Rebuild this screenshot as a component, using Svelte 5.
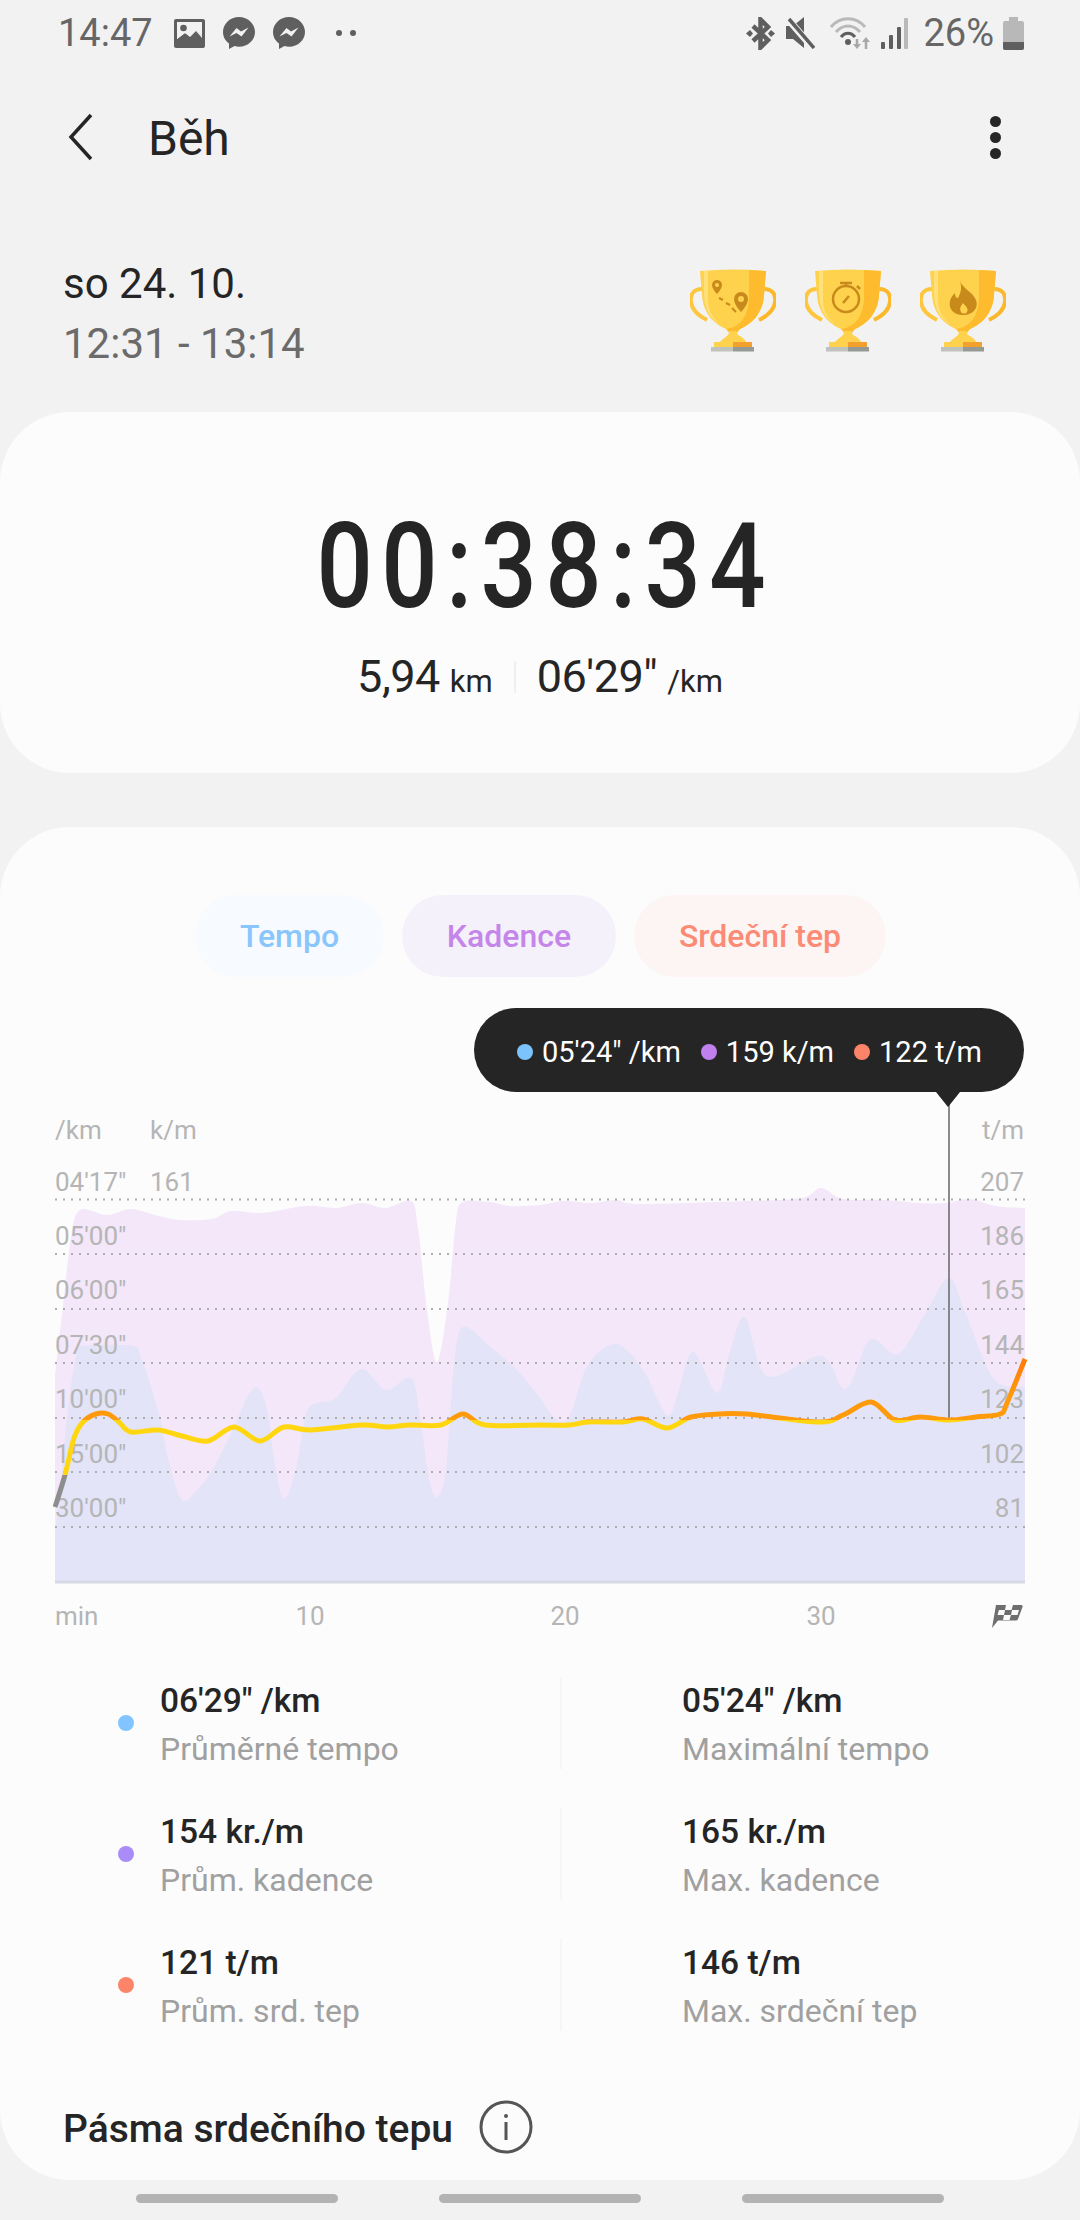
<script lang="ts">
  type Pt = [number, number];

  const cadence: Pt[] = [[55,1376],[62,1314],[71,1238],[80,1210],[107,1215],[131,1209],[155,1215],[179,1220],[212,1219],[231,1211],[262,1213],[306,1206],[336,1208],[362,1203],[386,1208],[411,1201],[418,1228],[427,1310],[437,1362],[448,1303],[456,1221],[463,1202],[489,1202],[510,1206],[540,1205],[564,1201],[592,1203],[616,1200],[640,1204],[747,1201],[802,1198],[821,1188],[843,1199],[884,1200],[919,1203],[946,1203],[970,1199],[995,1206],[1025,1208]];
  const pace: Pt[] = [[55,1534],[62,1469],[69,1400],[77,1352],[83,1346],[132,1346],[141,1358],[158,1410],[169,1462],[182,1500],[198,1489],[213,1469],[234,1427],[248,1396],[258,1388],[267,1410],[275,1465],[284,1499],[296,1469],[306,1414],[317,1403],[336,1398],[361,1369],[386,1390],[411,1378],[420,1417],[429,1479],[437,1497],[446,1469],[454,1365],[463,1327],[489,1346],[516,1369],[540,1398],[554,1417],[569,1417],[588,1365],[616,1344],[643,1370],[667,1415],[678,1393],[693,1352],[717,1393],[729,1355],[745,1317],[767,1376],[821,1356],[846,1389],[870,1340],[898,1354],[925,1314],[949,1278],[967,1317],[994,1379],[1025,1387]];
  const heart: Pt[] = [[55,1507],[65,1475],[74,1438],[83,1422],[96,1414],[108,1414],[119,1422],[131,1432],[158,1430],[182,1436],[208,1441],[234,1427],[260,1441],[284,1427],[310,1430],[361,1425],[387,1427],[410,1425],[441,1425],[463,1414],[485,1425],[540,1425],[569,1425],[588,1422],[622,1422],[643,1419],[667,1428],[691,1417],[719,1414],[747,1414],[819,1422],[843,1415],[871,1402],[895,1420],[920,1417],[949,1420],[976,1417],[1000,1414],[1007,1403],[1025,1359]];

  // catmull-rom through the sampled points
  function smooth(p: Pt[]): string {
    let d = `M${p[0][0]} ${p[0][1]}`;
    for (let i = 0; i < p.length - 1; i++) {
      const a = p[Math.max(i - 1, 0)], b = p[i], c = p[i + 1], e = p[Math.min(i + 2, p.length - 1)];
      const c1x = b[0] + (c[0] - a[0]) / 6, c1y = b[1] + (c[1] - a[1]) / 6;
      const c2x = c[0] - (e[0] - b[0]) / 6, c2y = c[1] - (e[1] - b[1]) / 6;
      d += `C${c1x.toFixed(1)} ${c1y.toFixed(1)} ${c2x.toFixed(1)} ${c2y.toFixed(1)} ${c[0]} ${c[1]}`;
    }
    return d;
  }
  const area = (p: Pt[]) => `${smooth(p)}L1025 1582L55 1582Z`;

  const grid = [1199.5, 1254, 1309, 1363, 1418, 1472, 1527];
  const paceLabels: [string, number][] = [["04'17\"",1191],["05'00\"",1245],["06'00\"",1299],["07'30\"",1354],["10'00\"",1408],["15'00\"",1463],["30'00\"",1517]];
  const heartLabels: [string, number][] = [["207",1191],["186",1245],["165",1299],["144",1354],["123",1408],["102",1463],["81",1517]];

  const stats = [
    { dot: '#82c4ff', value: `06'29" /km`, label: 'Průměrné tempo', max: `05'24" /km`, maxLabel: 'Maximální tempo' },
    { dot: '#a98cf8', value: '154 kr./m', label: 'Prům. kadence', max: '165 kr./m', maxLabel: 'Max. kadence' },
    { dot: '#fc8469', value: '121 t/m', label: 'Prům. srd. tep', max: '146 t/m', maxLabel: 'Max. srdeční tep' }
  ];
</script>

{#snippet cup()}
  <path d="M12 20C3 20 0 26 1 33C2 42 9 47 17 51" fill="none" stroke="#fdc63c" stroke-width="4"/>
  <path d="M74 20C83 20 86 26 85 33C84 42 77 47 69 51" fill="none" stroke="#fbb82b" stroke-width="4"/>
  <path d="M10 2Q43 -1 76 2L74 26C73 44 62 55 50 60L47 64L39 64L36 60C24 55 13 44 12 26Z" fill="#ffd24d"/>
  <path d="M59 1L76 2L74 26C73 44 62 55 50 60L44 66L36 60C50 58 58 48 59 30Z" fill="#fdbb2d"/>
  <path d="M14 2L18 2L18 30C18 44 24 50 30 55C20 50 15 40 14 26Z" fill="#ffe07a"/>
  <path d="M40 62L46 62L48 66C52 68 55 70 56 73L30 73C32 70 36 68 38 66Z" fill="#ffd24d"/>
  <rect x="24" y="73" width="19" height="5" fill="#ffd24d"/>
  <rect x="43" y="73" width="19" height="5" fill="#f2a02e"/>
  <rect x="21" y="78" width="22" height="4.5" fill="#bfc2bd"/>
  <rect x="43" y="78" width="21" height="4.5" fill="#959a94"/>
{/snippet}

{#snippet bubble()}
  <svg class="ico gap18" width="32" height="32" viewBox="0 0 32 32">
    <path d="M16 0C7 0 0 6.800 0 15C0 20 2.500 24 6 26.500V32L11.500 29C13 29.500 14.500 29.700 16 29.700C25 29.700 32 23 32 15C32 6.800 25 0 16 0Z" fill="#5f5f5f"/>
    <path d="M6.500 19.500L13.500 11L18 14.500L25.500 10.500L18.500 19.500L13.500 16Z" fill="#f2f2f2"/>
  </svg>
{/snippet}

<div class="screen">
  <div class="status">
    <span class="clock">14:47</span>
    <svg class="ico first" width="31" height="29" viewBox="0 0 31 29">
      <rect width="31" height="29" rx="2" fill="#5f5f5f"/>
      <rect x="3" y="3" width="25" height="17" fill="#f2f2f2"/>
      <circle cx="9.500" cy="9" r="3.300" fill="#5f5f5f"/>
      <path d="M3 20L11 14L16 17L22 11L28 17V26H3Z" fill="#5f5f5f"/>
      <path d="M3 20L11 14L16 18L22 12L28 19V17L22 10L16 16L11 12L3 18Z" fill="#f2f2f2"/>
    </svg>
    {@render bubble()}
    {@render bubble()}
    <span class="more"><i></i><i></i></span>
    <span class="grow"></span>
    <svg class="ico" width="29" height="33" viewBox="0 0 29 33">
      <path d="M7 9L22 23L14.500 30.500V2.500L22 10L7 24" fill="none" stroke="#5f5f5f" stroke-width="4.500"/>
      <path d="M0 16.500L4 13L7 16.500L4 20ZM29 16.500L25 13L22 16.500L25 20Z" fill="#5f5f5f"/>
    </svg>
    <svg class="ico gap11" width="29" height="32" viewBox="0 0 29 32">
      <path d="M0 9H7L18 0V31L7 22H0Z" fill="#5f5f5f"/>
      <path d="M1 1L27 31" stroke="#f2f2f2" stroke-width="7"/>
      <path d="M3 2L28 31" stroke="#5f5f5f" stroke-width="3.500"/>
    </svg>
    <svg class="ico gap15" width="42" height="32" viewBox="0 0 42 32">
      <g fill="none" stroke-width="3">
        <path d="M1 10C10 -1 26 -1 35 10" stroke="#b9b9b9"/>
        <path d="M6 15C13 7 23 7 30 15" stroke="#b9b9b9"/>
        <path d="M11 20C15 15 21 15 25 20" stroke="#5f5f5f"/>
      </g>
      <circle cx="18" cy="25" r="3" fill="#5f5f5f"/>
      <path d="M27 22V30M36 32V24" stroke="#a8a8a8" stroke-width="2.500"/>
      <path d="M23 27L27 32L31 27ZM32 25L36 20L40 25Z" fill="#a8a8a8"/>
    </svg>
    <svg class="ico gap9" width="27" height="31" viewBox="0 0 27 31">
      <rect x="0" y="24" width="4" height="7" rx="1" fill="#5f5f5f"/>
      <rect x="8" y="17" width="4" height="14" rx="1" fill="#5f5f5f"/>
      <rect x="16" y="9" width="4" height="22" rx="1" fill="#5f5f5f"/>
      <rect x="23" y="0" width="4" height="31" rx="1" fill="#b9b9b9"/>
    </svg>
    <span class="pct">26%</span>
    <svg class="ico gap9" width="21" height="33" viewBox="0 0 21 33">
      <path d="M6 0H15V4H19Q21 4 21 6V31Q21 33 19 33H2Q0 33 0 31V6Q0 4 2 4H6Z" fill="#b8b8b8"/>
      <path d="M0 25H21V31Q21 33 19 33H2Q0 33 0 31Z" fill="#5f5f5f"/>
    </svg>
  </div>

  <header class="bar">
    <svg class="back" width="26" height="48" viewBox="0 0 26 48">
      <path d="M23 2L3 24L23 46" fill="none" stroke="#252525" stroke-width="3.500"/>
    </svg>
    <h1>Běh</h1>
    <span class="kebab"><i></i><i></i><i></i></span>
  </header>

  <section class="summary">
    <div class="when">
      <div class="date">so 24. 10.</div>
      <div class="time">12:31 - 13:14</div>
    </div>
    <div class="cups">
      <svg width="86" height="83" viewBox="0 0 86 83">
        {@render cup()}
        <g fill="#c98a1c">
          <path d="M22 16a5 5 0 0 1 10 0c0 4-5 9-5 9s-5-5-5-9Z"/>
          <path d="M46 30a7 7 0 0 1 14 0c0 6-7 13-7 13s-7-7-7-13Z" transform="translate(-2 0)"/>
        </g>
        <path d="M29 29L33 31M36 34L40 36M42 39L46 43" stroke="#c98a1c" stroke-width="2" fill="none"/>
        <circle cx="27" cy="16" r="2" fill="#ffd24d"/>
        <circle cx="51" cy="30" r="3" fill="#ffd24d"/>
      </svg>
      <svg width="86" height="83" viewBox="0 0 86 83">
        {@render cup()}
        <circle cx="41" cy="30" r="13" fill="none" stroke="#c98a1c" stroke-width="2.500"/>
        <path d="M35 14H47M41 14V18M52 17L55 20M38 34L44 27" stroke="#c98a1c" stroke-width="2.500" fill="none"/>
      </svg>
      <svg width="86" height="83" viewBox="0 0 86 83">
        {@render cup()}
        <path d="M40 12C43 20 52 22 56 31C59 40 52 46 43 46C34 46 28 40 30 32C31 28 33 26 35 24C35 27 36 29 38 29C41 24 42 18 40 12ZM43 34C41 37 39 39 41 43C42 45 46 45 47 43C49 39 45 37 43 34Z" fill="#c98a1c" fill-rule="evenodd"/>
      </svg>
    </div>
  </section>

  <section class="card total">
    <div class="timer">00:38:34</div>
    <div class="splits">
      <span class="num">5,94</span><span class="unit">km</span>
      <span class="sep"></span>
      <span class="num">06'29"</span><span class="unit">/km</span>
    </div>
  </section>

  <section class="card detail">
    <div class="tabs">
      <span class="tab t-blue">Tempo</span>
      <span class="tab t-purple">Kadence</span>
      <span class="tab t-red">Srdeční tep</span>
    </div>

    <div class="chart">
      <svg width="1080" height="645" viewBox="0 1000 1080 645">
        <defs>
          <linearGradient id="hr" gradientUnits="userSpaceOnUse" x1="0" y1="1350" x2="0" y2="1510">
            <stop offset="0.1" stop-color="#ff7f0a"/>
            <stop offset="0.28" stop-color="#ff9a0c"/>
            <stop offset="0.44" stop-color="#ff9a0c"/>
            <stop offset="0.44" stop-color="#ffd60f"/>
            <stop offset="0.78" stop-color="#ffd60f"/>
            <stop offset="0.78" stop-color="#8e8e8e"/>
          </linearGradient>
        </defs>
        <path d={area(cadence)} fill="#f3e7f9"/>
        <path d={area(pace)} fill="#e3e4f8"/>
        {#each grid as y}
          <line class="grid" x1="55" x2="1025" y1={y} y2={y}/>
        {/each}
        <line class="axis" x1="55" x2="1025" y1="1582" y2="1582"/>

        <text class="lbl" x="55" y="1139">/km</text>
        <text class="lbl" x="150" y="1139">k/m</text>
        <text class="lbl" x="150" y="1191">161</text>
        <text class="lbl end" x="1024" y="1139">t/m</text>
        {#each paceLabels as [t, y]}
          <text class="lbl" x="55" {y}>{t}</text>
        {/each}
        {#each heartLabels as [t, y]}
          <text class="lbl end" x="1024" {y}>{t}</text>
        {/each}

        <line class="cursor" x1="949" x2="949" y1="1100" y2="1418"/>
        <path d={smooth(heart)} fill="none" stroke="url(#hr)" stroke-width="5" stroke-linejoin="round"/>

        <text class="lbl" x="55" y="1625">min</text>
        <text class="lbl mid" x="310" y="1625">10</text>
        <text class="lbl mid" x="565" y="1625">20</text>
        <text class="lbl mid" x="821" y="1625">30</text>
        <g transform="translate(992 1603)">
          <path d="M4 2H29Q31 2 30.500 4L26 16Q25.500 17.500 24 17.500H6L0 25Z" fill="#6e6e6e"/>
          <path d="M14 2H21L19.500 7H13ZM7 7H13L12 12H5.500ZM20 7H27L25.500 12H19ZM12 12H19L17.500 17H11Z" fill="#fcfcfc"/>
        </g>
      </svg>
      <div class="tip">
        <span class="tip-item"><i class="b"></i>05'24" /km</span>
        <span class="tip-item"><i class="p"></i>159 k/m</span>
        <span class="tip-item"><i class="r"></i>122 t/m</span>
      </div>
    </div>

    <div class="stats">
      {#each stats as s}
        <div class="row">
          <span class="dot" style="background:{s.dot}"></span>
          <div class="cell">
            <div class="val">{s.value}</div>
            <div class="cap">{s.label}</div>
          </div>
          <div class="cell right">
            <div class="val">{s.max}</div>
            <div class="cap">{s.maxLabel}</div>
          </div>
        </div>
      {/each}
    </div>

    <div class="zones">
      <h2>Pásma srdečního tepu</h2>
      <svg width="54" height="54" viewBox="0 0 54 54">
        <circle cx="27" cy="27" r="25" fill="none" stroke="#555" stroke-width="3"/>
        <circle cx="27" cy="16" r="2" fill="#555"/>
        <rect x="25.500" y="22" width="3" height="18" fill="#555"/>
      </svg>
    </div>
  </section>

  <nav class="softkeys"><i></i><i></i><i></i></nav>
</div>

<style>
  :global(body) {
    margin: 0;
    background: #f2f2f2;
  }

  .screen {
    width: 1080px;
    height: 2220px;
    overflow: hidden;
    background: #f2f2f2;
    font-family: Roboto, "Noto Sans", sans-serif;
    color: #252525;
  }

  .status {
    height: 64px;
    display: flex;
    align-items: center;
    padding: 2px 56px 0 58px;
    box-sizing: border-box;
    color: #666;
    font-size: 38px;
  }
  .ico { display: block; flex: none; }
  .first { margin-left: 21px; }
  .grow { flex: 1; }
  .gap18 { margin-left: 18px; }
  .gap15 { margin-left: 15px; }
  .gap11 { margin-left: 11px; }
  .gap9 { margin-left: 9px; }
  .pct { margin-left: 15px; }
  .more { display: flex; gap: 8px; margin-left: 31px; }
  .more i { width: 6px; height: 6px; border-radius: 50%; background: #5f5f5f; }

  .bar {
    height: 146px;
    display: flex;
    align-items: center;
    padding: 0 79px 0 68px;
  }
  .back { flex: none; }
  h1 {
    margin: 2px 0 0 54px;
    font-size: 48px;
    font-weight: 400;
    flex: 1;
  }
  .kebab { display: flex; flex-direction: column; gap: 5px; }
  .kebab i { width: 11px; height: 11px; border-radius: 50%; background: #252525; }

  .summary {
    height: 202px;
    display: flex;
    justify-content: space-between;
    padding: 49px 74px 0 63px;
    box-sizing: border-box;
  }
  .date { font-size: 42px; line-height: 50px; }
  .time { font-size: 42px; line-height: 50px; margin-top: 10px; color: #6b6b6b; }
  .cups { display: flex; gap: 29px; margin-top: 10px; height: 83px; }

  .card {
    background: #fcfcfc;
    border-radius: 70px;
  }
  .total {
    height: 361px;
    box-sizing: border-box;
    padding-top: 96px;
    display: flex;
    flex-direction: column;
    align-items: center;
  }
  .timer {
    font-size: 118px;
    line-height: 118px;
    font-weight: 500;
    letter-spacing: 10px;
    margin-right: -10px;
    transform: scaleX(0.84);
    white-space: nowrap;
    color: #252525;
  }
  .splits {
    display: flex;
    align-items: baseline;
    margin-top: 24px;
  }
  .num { font-size: 45px; letter-spacing: -0.5px; }
  .unit { font-size: 31px; margin-left: 10px; }
  .sep {
    width: 2px;
    height: 32px;
    background: #f0f0f0;
    margin: 0 21px 0 21px;
    align-self: center;
  }

  .detail {
    margin-top: 54px;
    height: 1353px;
    padding-top: 68px;
    box-sizing: border-box;
  }
  .tabs {
    display: flex;
    gap: 18px;
    padding-left: 195px;
  }
  .tab {
    height: 82px;
    border-radius: 41px;
    display: flex;
    align-items: center;
    justify-content: center;
    font-size: 32px;
    font-weight: 500;
    box-sizing: border-box;
  }
  .t-blue { width: 189px; background: #f7fafe; color: #8ac6fc; }
  .t-purple { width: 214px; background: #f5f1fb; color: #c586ea; }
  .t-red { width: 252px; background: #fcf5f4; color: #fb8b74; }

  .chart {
    position: relative;
    height: 645px;
    margin-top: 23px;
  }
  .chart svg { display: block; }
  .grid { stroke: #adadad; stroke-width: 2; stroke-dasharray: 2 6; }
  .axis { stroke: #d8d8e6; stroke-width: 3; }
  .cursor { stroke: #666; stroke-width: 1.5; }
  .lbl { font-size: 26px; fill: #b5b5b5; }
  .end { text-anchor: end; }
  .mid { text-anchor: middle; }

  .tip {
    position: absolute;
    left: 474px;
    top: 8px;
    width: 550px;
    height: 84px;
    box-sizing: border-box;
    padding: 4px 0 0 43px;
    border-radius: 42px;
    background: #252525;
    display: flex;
    align-items: center;
    gap: 20px;
    color: #fff;
    font-size: 29px;
  }
  .tip::after {
    content: "";
    position: absolute;
    left: 462px;
    top: 84px;
    border: 12px solid transparent;
    border-top: 15px solid #252525;
    border-bottom: 0;
  }
  .tip-item { display: flex; align-items: center; gap: 9px; white-space: nowrap; }
  .tip-item i { width: 16px; height: 16px; border-radius: 50%; }
  .b { background: #7cc2fb; }
  .p { background: #c080ee; }
  .r { background: #fc8469; }

  .stats {
    margin-top: 32px;
    display: flex;
    flex-direction: column;
    gap: 39px;
  }
  .row {
    height: 92px;
    display: flex;
    align-items: center;
    padding-left: 118px;
  }
  .dot {
    width: 16px;
    height: 16px;
    border-radius: 50%;
    flex: none;
    margin-right: 26px;
  }
  .cell { width: 400px; height: 92px; }
  .cell.right {
    flex: 1;
    border-left: 2px solid #f6f6f6;
    padding-left: 120px;
  }
  .val { font-size: 33.5px; line-height: 46px; font-weight: 500; color: #252525; padding-top: 1px; }
  .cap { font-size: 32px; line-height: 46px; margin-top: 2px; color: #a0a0a0; }

  .zones {
    display: flex;
    align-items: center;
    gap: 26px;
    margin-top: 69px;
    padding-left: 63px;
  }
  h2 {
    margin: 3px 0 0;
    font-size: 39px;
    font-weight: 500;
    color: #252525;
  }

  .softkeys {
    display: flex;
    padding-left: 136px;
    gap: 101px;
    margin-top: 14px;
  }
  .softkeys i {
    width: 202px;
    height: 9px;
    border-radius: 5px;
    background: #b3b3b3;
  }
</style>
